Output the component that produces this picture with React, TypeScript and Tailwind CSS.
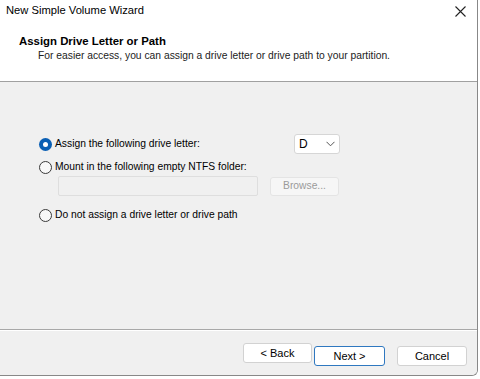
import React from "react";

const Radio = ({ checked }: { checked?: boolean }) =>
  checked ? (
    <span className="w-[13px] h-[13px] rounded-full bg-[#0a5fb4] flex items-center justify-center shrink-0">
      <span className="w-[5px] h-[5px] rounded-full bg-white" />
    </span>
  ) : (
    <span className="w-[13px] h-[13px] rounded-full border border-[#3a3a3a] bg-[#f8f8f8] shrink-0" />
  );

const WizardButton = ({ label, primary, w }: { label: string; primary?: boolean; w: string }) => (
  <button
    className={
      primary
        ? "h-[20px] rounded-[3px] bg-white border border-[#2f78c0] text-[11px] text-black " + w
        : "h-[20px] rounded-[3px] bg-white border border-[#d2d2d2] text-[11px] text-black " + w
    }
  >
    {label}
  </button>
);

export default function App() {
  return (
    <div className="w-[480px] h-[379px] bg-white overflow-hidden text-black font-['Liberation_Sans',Arial,sans-serif]">
      <div className="w-[478px] h-[376px] flex flex-col border-r border-b border-[#888] rounded-br-[6px] overflow-hidden">
        {/* title bar */}
        <div className="h-[22px] flex items-center justify-between pl-[6px] pr-[11px] bg-white shrink-0">
          <span className="text-[11.2px] leading-none">New Simple Volume Wizard</span>
          <svg width="11" height="11" viewBox="0 0 11 11" className="mt-[1px]">
            <path d="M0.5 0.5 L10.5 10.5 M10.5 0.5 L0.5 10.5" stroke="#222" strokeWidth="1.1" />
          </svg>
        </div>

        {/* header */}
        <div className="h-[60px] bg-white pl-[19px] pt-[12px] shrink-0 border-b border-[#a0a0a0]">
          <div className="text-[11.4px] font-bold leading-[15px]">Assign Drive Letter or Path</div>
          <div className="text-[10.3px] leading-[14px] pl-[19px] text-[#222]">
            For easier access, you can assign a drive letter or drive path to your partition.
          </div>
        </div>

        {/* body */}
        <div className="flex-1 bg-[#f0f0f0] pl-[39px] pt-[52px] text-[10.3px]">
          <div className="flex items-center h-[20px]">
            <div className="w-[255px] flex items-center gap-[3px]">
              <Radio checked />
              <span>Assign the following drive letter:</span>
            </div>
            <div className="w-[46px] h-[20px] bg-white border border-[#d6d6d6] rounded-[3px] flex items-center justify-between pl-[4px] pr-[4px]">
              <span className="text-[12px]">D</span>
              <svg width="9" height="6" viewBox="0 0 9 6">
                <path d="M0.5 0.8 L4.5 4.8 L8.5 0.8" stroke="#555" strokeWidth="1" fill="none" />
              </svg>
            </div>
          </div>

          <div className="flex items-center h-[16px] mt-[5px] gap-[3px]">
            <Radio />
            <span>Mount in the following empty NTFS folder:</span>
          </div>

          <div className="flex items-center mt-[1px] ml-[19px]">
            <div className="w-[200px] h-[20px] border border-[#dedede] rounded-[2px] bg-[#f0f0f0]" />
            <div className="ml-[12px] w-[69px] h-[19px] border border-[#e4e4e4] rounded-[3px] bg-[#f6f6f6] text-[#9a9a9a] flex items-center justify-center">
              Browse...
            </div>
          </div>

          <div className="flex items-center h-[16px] mt-[11px] gap-[3px]">
            <Radio />
            <span>Do not assign a drive letter or drive path</span>
          </div>
        </div>

        {/* footer */}
        <div className="h-[46px] bg-[#f0f0f0] border-t border-[#a8a8a8] shrink-0">
          <div className="border-t border-white h-full flex items-start justify-end pt-[12px] pr-[10px]">
            <WizardButton label="< Back" w="w-[69px]" />
            <span className="ml-[2px]">
              <WizardButton label="Next >" primary w="w-[71px]" />
            </span>
            <span className="ml-[12px]">
              <WizardButton label="Cancel" w="w-[70px]" />
            </span>
          </div>
        </div>
      </div>
    </div>
  );
}
